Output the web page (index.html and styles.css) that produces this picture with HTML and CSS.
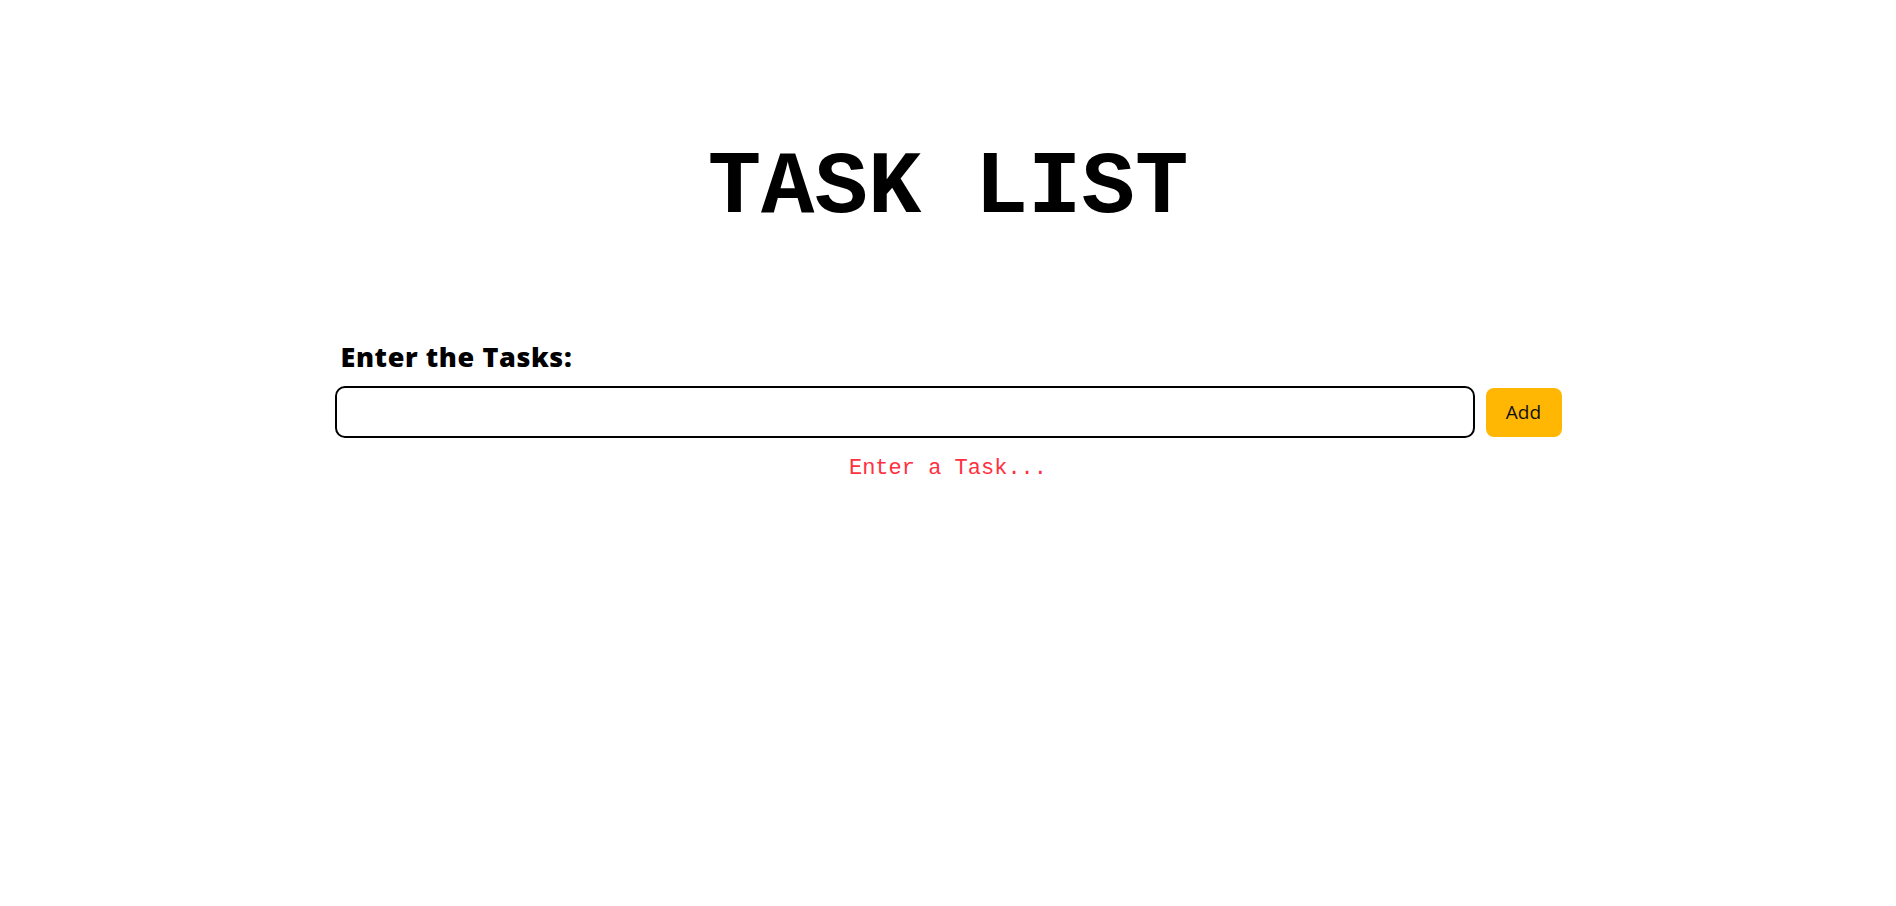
FILE: index.html
```html
<!DOCTYPE html>
<html>
<head>
<meta charset="utf-8">
<link rel="stylesheet" href="styles.css">
<title>Task List</title>
</head>
<body>
<main class="page">
  <h1 class="title">TASK LIST</h1>
  <section class="entry">
    <label class="entry-label" for="task">Enter the Tasks:</label>
    <div class="entry-row">
      <input class="entry-input" id="task" type="text">
      <button class="add-btn" type="button">Add</button>
    </div>
    <p class="hint">Enter a Task...</p>
  </section>
</main>
</body>
</html>
```
FILE: styles.css
```css
html, body {
  margin: 0;
  padding: 0;
  background: #ffffff;
}
.page {
  display: flex;
  flex-direction: column;
  align-items: center;
  padding-top: 139px;
}
.title {
  margin: 0;
  font-family: "Liberation Mono", monospace;
  font-weight: 700;
  font-size: 89px;
  line-height: 100px;
  color: #000;
}
.entry {
  width: 1227px;
  margin-top: 100px;
  display: flex;
  flex-direction: column;
}
.entry-label {
  font-family: "Open Sans", sans-serif;
  font-weight: 800;
  font-size: 27px;
  line-height: 36px;
  letter-spacing: 0.6px;
  padding-left: 6px;
  color: #000;
}
.entry-row {
  display: flex;
  align-items: center;
  gap: 11px;
  margin-top: 11px;
}
.entry-input {
  flex: 1;
  height: 52px;
  box-sizing: border-box;
  border: 2px solid #000;
  border-radius: 10px;
  font-size: 20px;
  padding: 0 12px;
}
.add-btn {
  width: 76px;
  height: 49px;
  border: none;
  border-radius: 8px;
  background: #ffb703;
  font-family: "Open Sans", sans-serif;
  font-size: 19px;
  color: #111;
}
.hint {
  margin: 18px 0 0;
  text-align: center;
  font-family: "Liberation Mono", monospace;
  font-size: 22px;
  color: #ff3040;
}
```
